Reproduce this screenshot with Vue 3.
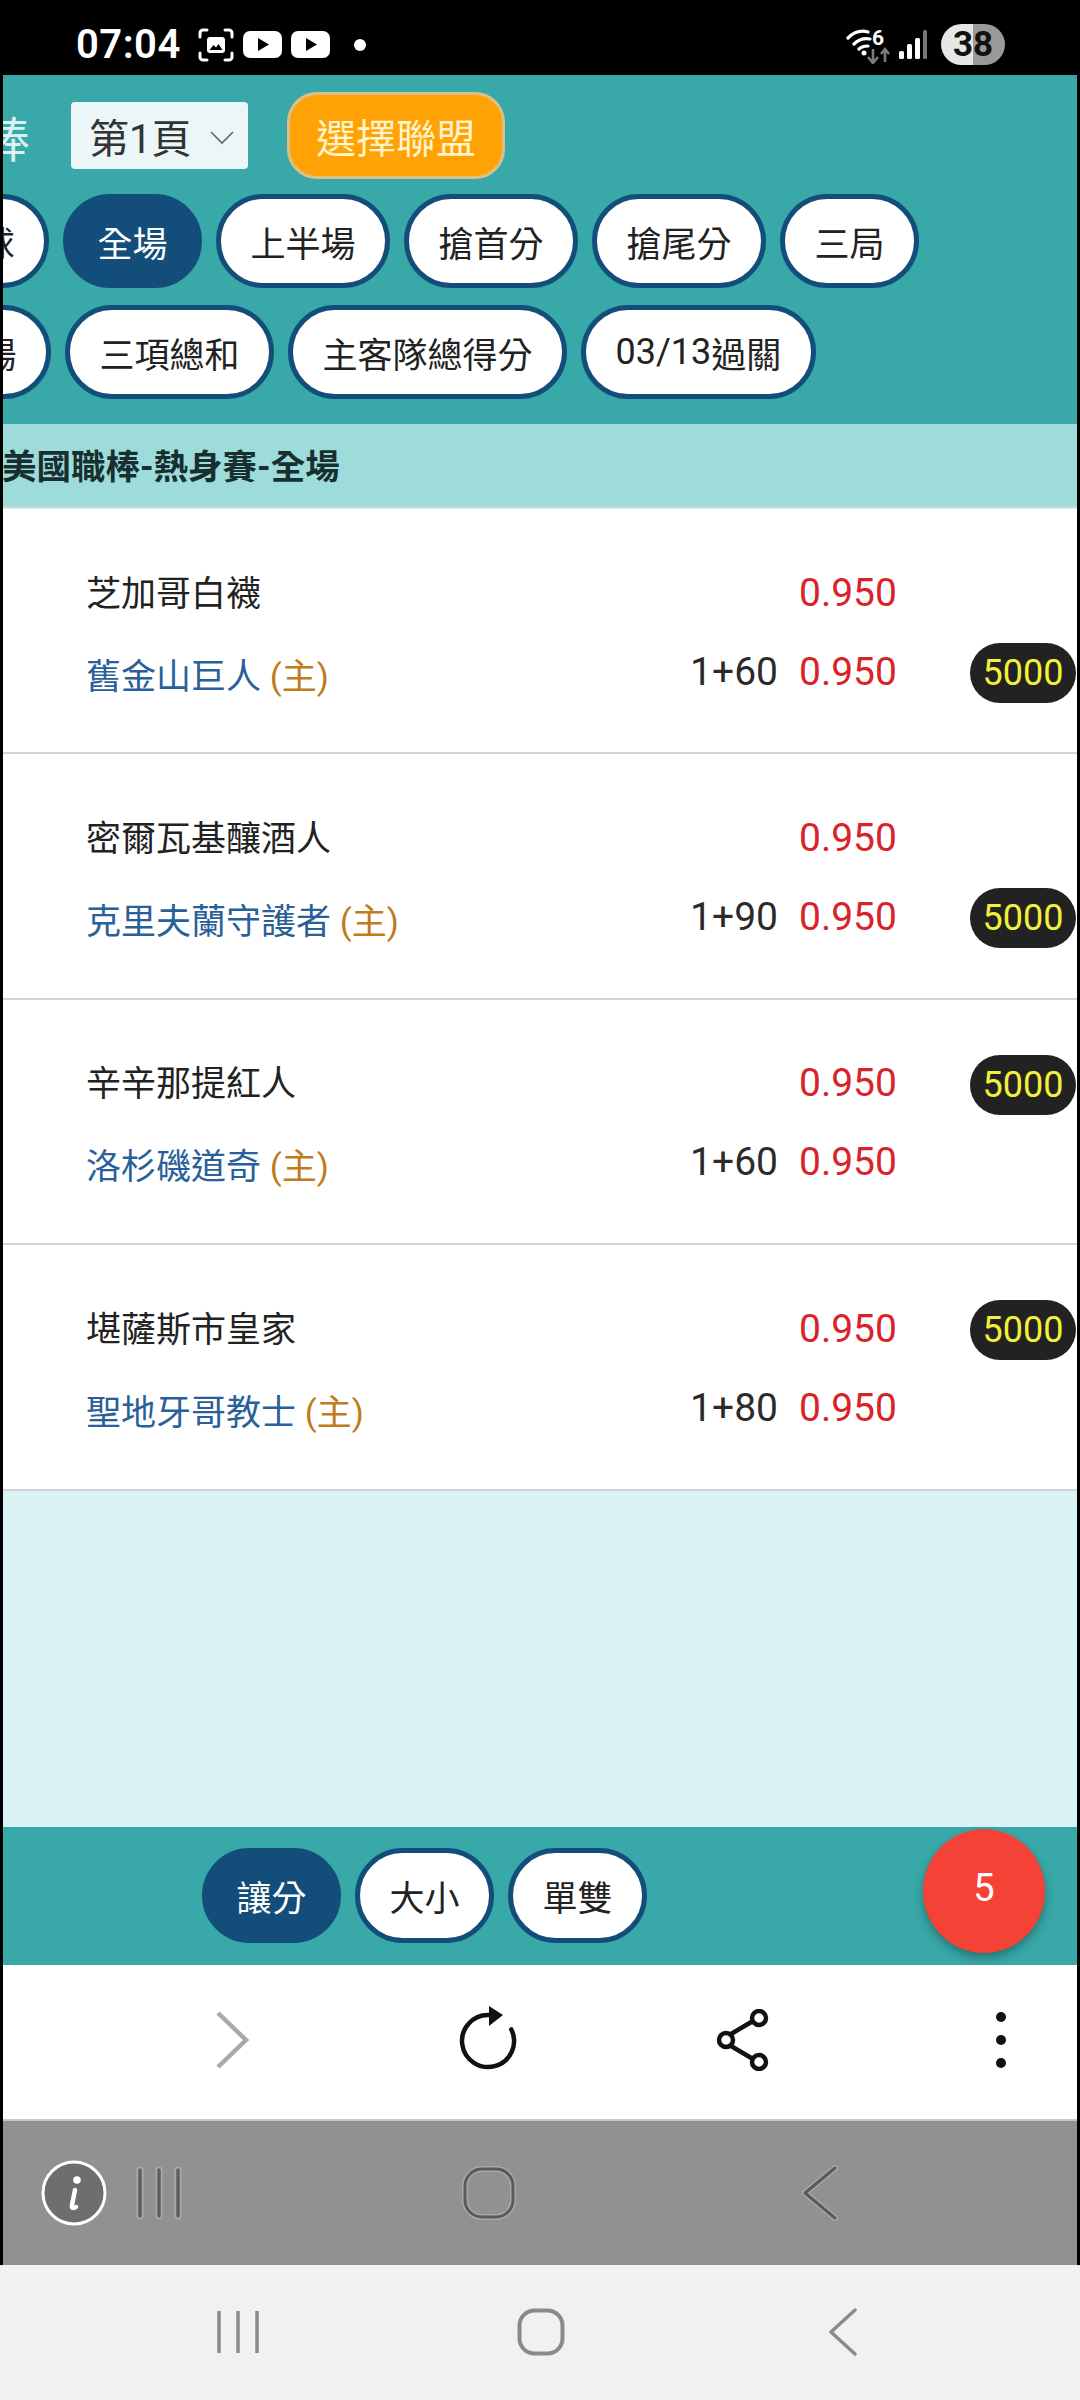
<script setup>
const firstTabs = [
  { label: '讓球', first: true },
  { label: '全場', active: true },
  { label: '上半場' },
  { label: '搶首分' },
  { label: '搶尾分' },
  { label: '三局' },
]

const secondTabs = [
  { label: '下半場', first: true },
  { label: '三項總和' },
  { label: '主客隊總得分' },
]

const betTabs = [
  { label: '讓分', active: true },
  { label: '大小' },
  { label: '單雙' },
]

// limit sits on the home line for the first two games, on the away line after that
const games = [
  { away: '芝加哥白襪', home: '舊金山巨人', line: '1+60', limitOn: 'home' },
  { away: '密爾瓦基釀酒人', home: '克里夫蘭守護者', line: '1+90', limitOn: 'home' },
  { away: '辛辛那提紅人', home: '洛杉磯道奇', line: '1+60', limitOn: 'away' },
  { away: '堪薩斯市皇家', home: '聖地牙哥教士', line: '1+80', limitOn: 'away' },
]
</script>

<template>
  <div class="page">
    <header class="status">
      <span class="clock">07:04</span>
      <svg class="ic-scan" width="36" height="34" viewBox="0 0 36 34" fill="none">
        <path d="M2 9V5a3 3 0 0 1 3-3h4M27 2h4a3 3 0 0 1 3 3v4M34 25v4a3 3 0 0 1-3 3h-4M9 32H5a3 3 0 0 1-3-3v-4" stroke="#fff" stroke-width="3" stroke-linecap="round" />
        <rect x="9" y="9" width="18" height="16" rx="3" fill="#fff" />
        <path d="M11.500 22l4-5 2.500 2.500 2.500-3.500 4 6z" fill="#000" />
      </svg>
      <svg class="ic-yt" width="39" height="27" viewBox="0 0 39 27">
        <rect width="39" height="27" rx="7" fill="#fff" />
        <path d="M15 7l11 6.500-11 6.500z" fill="#000" />
      </svg>
      <svg class="ic-yt" width="39" height="27" viewBox="0 0 39 27">
        <rect width="39" height="27" rx="7" fill="#fff" />
        <path d="M15 7l11 6.500-11 6.500z" fill="#000" />
      </svg>
      <span class="dot"></span>
      <svg class="ic-wifi" width="46" height="38" viewBox="0 0 46 38" fill="none">
        <path d="M2 12C8 6 15 4 22 6M8 18C12 14 18 12 24 13M13 23C15 21 19 20 22 20" stroke="#fff" stroke-width="3.200" stroke-linecap="round" />
        <circle cx="18" cy="27" r="2.500" fill="#fff" />
        <text x="26" y="19" class="wifi-six">6</text>
        <path d="M27 23v14M22 31l5 6 5-6M39 36V23M35 28l4-5 4 5" stroke="#7a7a7a" stroke-width="2.600" />
      </svg>
      <svg class="ic-signal" width="28" height="29" viewBox="0 0 28 29">
        <rect x="0" y="21" width="5" height="8" rx="1.500" fill="#fff" />
        <rect x="8" y="14" width="5" height="15" rx="1.500" fill="#fff" />
        <rect x="16" y="8" width="5" height="21" rx="1.500" fill="#fff" />
        <rect x="24" y="0" width="4" height="29" rx="1.500" fill="#777" />
      </svg>
      <span class="battery">38</span>
    </header>

    <div class="frame">
      <section class="top">
        <div class="top-head">
          <span class="sport">棒</span>
          <div class="page-select">
            <span>第1頁</span>
            <svg width="24" height="14" viewBox="0 0 24 14" fill="none">
              <path d="M1 1l11 11L23 1" stroke="#666" stroke-width="1.600" />
            </svg>
          </div>
          <button class="league">選擇聯盟</button>
        </div>
        <div class="tabs">
          <span
            v-for="tab in firstTabs"
            :key="tab.label"
            class="pill"
            :class="{ active: tab.active, cut: tab.first }"
          >{{ tab.label }}</span>
        </div>
        <div class="tabs">
          <span
            v-for="tab in secondTabs"
            :key="tab.label"
            class="pill"
            :class="{ 'cut-long': tab.first }"
          >{{ tab.label }}</span>
          <span class="pill"><span class="date">03/13</span>過關</span>
        </div>
      </section>

      <h2 class="league-title">美國職棒-熱身賽-全場</h2>

      <section class="games">
        <div v-for="game in games" :key="game.home" class="game">
          <div class="line">
            <span class="team team-away">{{ game.away }}</span>
            <span class="odds">0.950</span>
            <span class="limit-slot"><span v-if="game.limitOn === 'away'" class="limit">5000</span></span>
          </div>
          <div class="line">
            <span class="team team-home">{{ game.home }} <em>(主)</em></span>
            <span class="handicap">{{ game.line }}</span>
            <span class="odds">0.950</span>
            <span class="limit-slot"><span v-if="game.limitOn === 'home'" class="limit">5000</span></span>
          </div>
        </div>
        <div class="games-empty"></div>
      </section>

      <section class="bet-bar">
        <span
          v-for="tab in betTabs"
          :key="tab.label"
          class="pill"
          :class="{ active: tab.active }"
        >{{ tab.label }}</span>
        <span class="fab">5</span>
      </section>

      <nav class="browser-bar">
        <svg class="ic-forward" width="34" height="58" viewBox="0 0 34 58" fill="none">
          <path d="M3 2l28 27L3 56" stroke="#aaa" stroke-width="4.500" />
        </svg>
        <svg class="ic-reload" width="62" height="68" viewBox="0 0 62 68" fill="none">
          <path d="M53.300 23.400A26 26 0 1 1 31 9" stroke="#111" stroke-width="4.500" stroke-linecap="round" />
          <path d="M31 0l14 9-14 11z" fill="#111" />
        </svg>
        <svg class="ic-share" width="56" height="62" viewBox="0 0 56 62" fill="none" stroke="#111" stroke-width="4.500">
          <path d="M16 25l22-13M16 37l22 13" />
          <circle cx="44" cy="9" r="7" />
          <circle cx="11" cy="31" r="7" />
          <circle cx="44" cy="53" r="7" />
        </svg>
        <svg class="ic-more" width="12" height="56" viewBox="0 0 12 56" fill="#111">
          <circle cx="6" cy="5" r="5" />
          <circle cx="6" cy="28" r="5" />
          <circle cx="6" cy="51" r="5" />
        </svg>
      </nav>

      <div class="dim-bar">
        <svg class="ic-info" width="66" height="66" viewBox="0 0 66 66">
          <circle cx="33" cy="33" r="31" fill="#6e6e6e" stroke="#fff" stroke-width="3" />
          <circle cx="36" cy="20" r="3.800" fill="#fff" />
          <path d="M34 30l-3 15c-.5 3 1 4 4 2" fill="none" stroke="#fff" stroke-width="4.500" stroke-linecap="round" />
        </svg>
        <svg class="ic-recent" width="46" height="54" viewBox="0 0 46 54" fill="none">
          <path d="M4 4v46M23 4v46M42 4v46" stroke="#aaa" stroke-width="7" stroke-linecap="round" />
          <path d="M4 4v46M23 4v46M42 4v46" stroke="#5f5f5f" stroke-width="3.500" stroke-linecap="round" />
        </svg>
        <svg class="ic-home" width="54" height="54" viewBox="0 0 54 54" fill="none">
          <rect x="3" y="3" width="48" height="48" rx="17" stroke="#a8a8a8" stroke-width="6" />
          <rect x="3" y="3" width="48" height="48" rx="17" stroke="#5a5a5a" stroke-width="3" />
        </svg>
        <svg class="ic-back" width="38" height="56" viewBox="0 0 38 56" fill="none">
          <path d="M34 3L4 28l30 25" stroke="#a8a8a8" stroke-width="6" stroke-linecap="round" stroke-linejoin="round" />
          <path d="M34 3L4 28l30 25" stroke="#5a5a5a" stroke-width="3" stroke-linecap="round" stroke-linejoin="round" />
        </svg>
      </div>
    </div>

    <footer class="nav-bar">
      <svg class="ic-recent-2" width="42" height="44" viewBox="0 0 42 44" fill="none">
        <path d="M2 1v42M21 1v42M40 1v42" stroke="#8a8a8a" stroke-width="3.500" />
      </svg>
      <svg class="ic-home-2" width="48" height="48" viewBox="0 0 48 48" fill="none">
        <rect x="2.500" y="2.500" width="43" height="43" rx="15" stroke="#8a8a8a" stroke-width="4" />
      </svg>
      <svg class="ic-back-2" width="30" height="48" viewBox="0 0 30 48" fill="none">
        <path d="M27 2L3 24l24 22" stroke="#8a8a8a" stroke-width="3.500" stroke-linecap="round" stroke-linejoin="round" />
      </svg>
    </footer>
  </div>
</template>

<style>
html,
body {
  margin: 0;
  background: #000;
}
</style>

<style scoped>
.page {
  width: 1080px;
  height: 2400px;
  overflow: hidden;
  font-family: Roboto, "Noto Sans CJK TC", sans-serif;
  background: #000;
}

.status {
  height: 75px;
  display: flex;
  align-items: center;
  padding: 14px 75px 0 76px;
  box-sizing: border-box;
  color: #fff;
}

.clock {
  font-size: 40px;
  font-weight: 600;
  letter-spacing: 0.5px;
}

.ic-scan {
  margin-left: 17px;
}

.ic-yt {
  margin-left: 9px;
}

.dot {
  width: 12px;
  height: 12px;
  border-radius: 50%;
  background: #fff;
  margin-left: 24px;
}

.ic-wifi {
  margin-left: auto;
}

.wifi-six {
  fill: #fff;
  font-size: 21px;
  font-weight: 700;
}

.ic-signal {
  margin-left: 7px;
}

.battery {
  width: 64px;
  height: 41px;
  margin-left: 14px;
  border-radius: 21px;
  background: linear-gradient(90deg, #e6e6e6 50%, #999 50%);
  color: #111;
  font-size: 35px;
  font-weight: 700;
  line-height: 41px;
  text-align: center;
}

.frame {
  padding: 0 3px;
}

.top {
  height: 349px;
  box-sizing: border-box;
  padding-top: 17px;
  background: #38a8a8;
  overflow: hidden;
}

.top-head {
  display: flex;
  align-items: center;
  height: 87px;
  margin-bottom: 15px;
}

.sport {
  margin-left: -21px;
  font-size: 48px;
  color: #d8f2f2;
}

.page-select {
  display: flex;
  align-items: center;
  box-sizing: border-box;
  width: 177px;
  height: 67px;
  margin-left: 41px;
  padding-left: 18px;
  gap: 18px;
  background: #ecf5f7;
  border-radius: 4px;
  font-size: 40px;
  color: #333;
}

.page-select svg {
  margin-top: 4px;
}

.league {
  width: 218px;
  height: 87px;
  margin-left: 39px;
  padding: 0;
  background: #ffa205;
  border: 3px solid #dcc088;
  border-radius: 30px;
  color: #fff3c8;
  font-family: inherit;
  font-size: 40px;
}

.tabs {
  display: flex;
  gap: 14px;
  margin-bottom: 17px;
}

.pill {
  display: flex;
  align-items: center;
  height: 94px;
  box-sizing: border-box;
  padding: 0 29.5px;
  flex: none;
  background: #fff;
  border: 5px solid #134e7a;
  border-radius: 47px;
  color: #222;
  font-size: 35px;
}

.pill.active {
  background: #134e7a;
  color: #fff;
}

.pill.cut {
  margin-left: -93px;
}

.pill.cut-long {
  margin-left: -126px;
}

.date {
  font-size: 36px;
}

.league-title {
  height: 84px;
  margin: 0;
  background: #9ddcdb;
  border-bottom: 2px solid #c4d8d8;
  box-sizing: border-box;
  color: #17302f;
  font-size: 34.5px;
  font-weight: 700;
  line-height: 86px;
  text-indent: -1px;
  white-space: nowrap;
}

.games {
  padding-top: 1px;
  background: #d9f2f3;
}

.game {
  height: 245.4px;
  box-sizing: border-box;
  padding: 44px 1px 0 83px;
  background: #fff;
  border-bottom: 2px solid #d2d2d2;
}

.line {
  display: flex;
  align-items: center;
  height: 79px;
  font-size: 39px;
}

.team {
  flex: 1;
  color: #222;
  font-size: 35px;
}

.team-away {
  margin-bottom: 5px;
}

.team-home {
  margin-top: 3px;
  color: #2a6099;
}

.team-home em {
  font-style: normal;
  color: #c07a20;
}

.handicap {
  margin-right: 21px;
  color: #2b2b2b;
}

.odds {
  width: 99px;
  color: #d8232a;
}

.limit-slot {
  width: 106px;
  height: 60px;
  margin: 3px 0 0 72px;
}

.limit {
  display: block;
  height: 60px;
  border-radius: 30px;
  background: #222;
  color: #f3f03c;
  font-size: 36px;
  line-height: 60px;
  text-align: center;
}

.games-empty {
  height: 336.4px;
}

.bet-bar {
  position: relative;
  display: flex;
  align-items: center;
  gap: 14px;
  height: 138px;
  box-sizing: border-box;
  padding-left: 199px;
  background: #38a8a8;
}

.bet-bar .pill {
  height: 95px;
  border-radius: 48px;
}

.fab {
  position: absolute;
  top: 2px;
  left: 920px;
  width: 122px;
  height: 124px;
  border-radius: 50%;
  background: #f44336;
  box-shadow: 0 5px 10px rgba(0, 0, 0, 0.3);
  color: #fff;
  font-size: 38px;
  line-height: 118px;
  text-align: center;
}

.browser-bar {
  display: flex;
  align-items: center;
  height: 154px;
  box-sizing: border-box;
  padding-bottom: 4px;
  background: #fff;
}

.ic-forward {
  margin-left: 212px;
}

.ic-reload {
  margin-left: 209px;
}

.ic-share {
  margin-left: 195px;
}

.ic-more {
  margin-left: 224px;
}

.dim-bar {
  display: flex;
  align-items: center;
  height: 146px;
  box-sizing: border-box;
  padding-left: 38px;
  background: #919191;
  border-top: 2px solid #c8c8c8;
}

.ic-recent {
  margin-left: 29px;
}

.ic-home {
  margin-left: 280px;
}

.ic-back {
  margin-left: 285px;
}

.nav-bar {
  display: flex;
  align-items: center;
  height: 135px;
  padding-left: 217px;
  background: #f0f1f3;
}

.ic-home-2 {
  margin-left: 258px;
}

.ic-back-2 {
  margin-left: 263px;
}
</style>
